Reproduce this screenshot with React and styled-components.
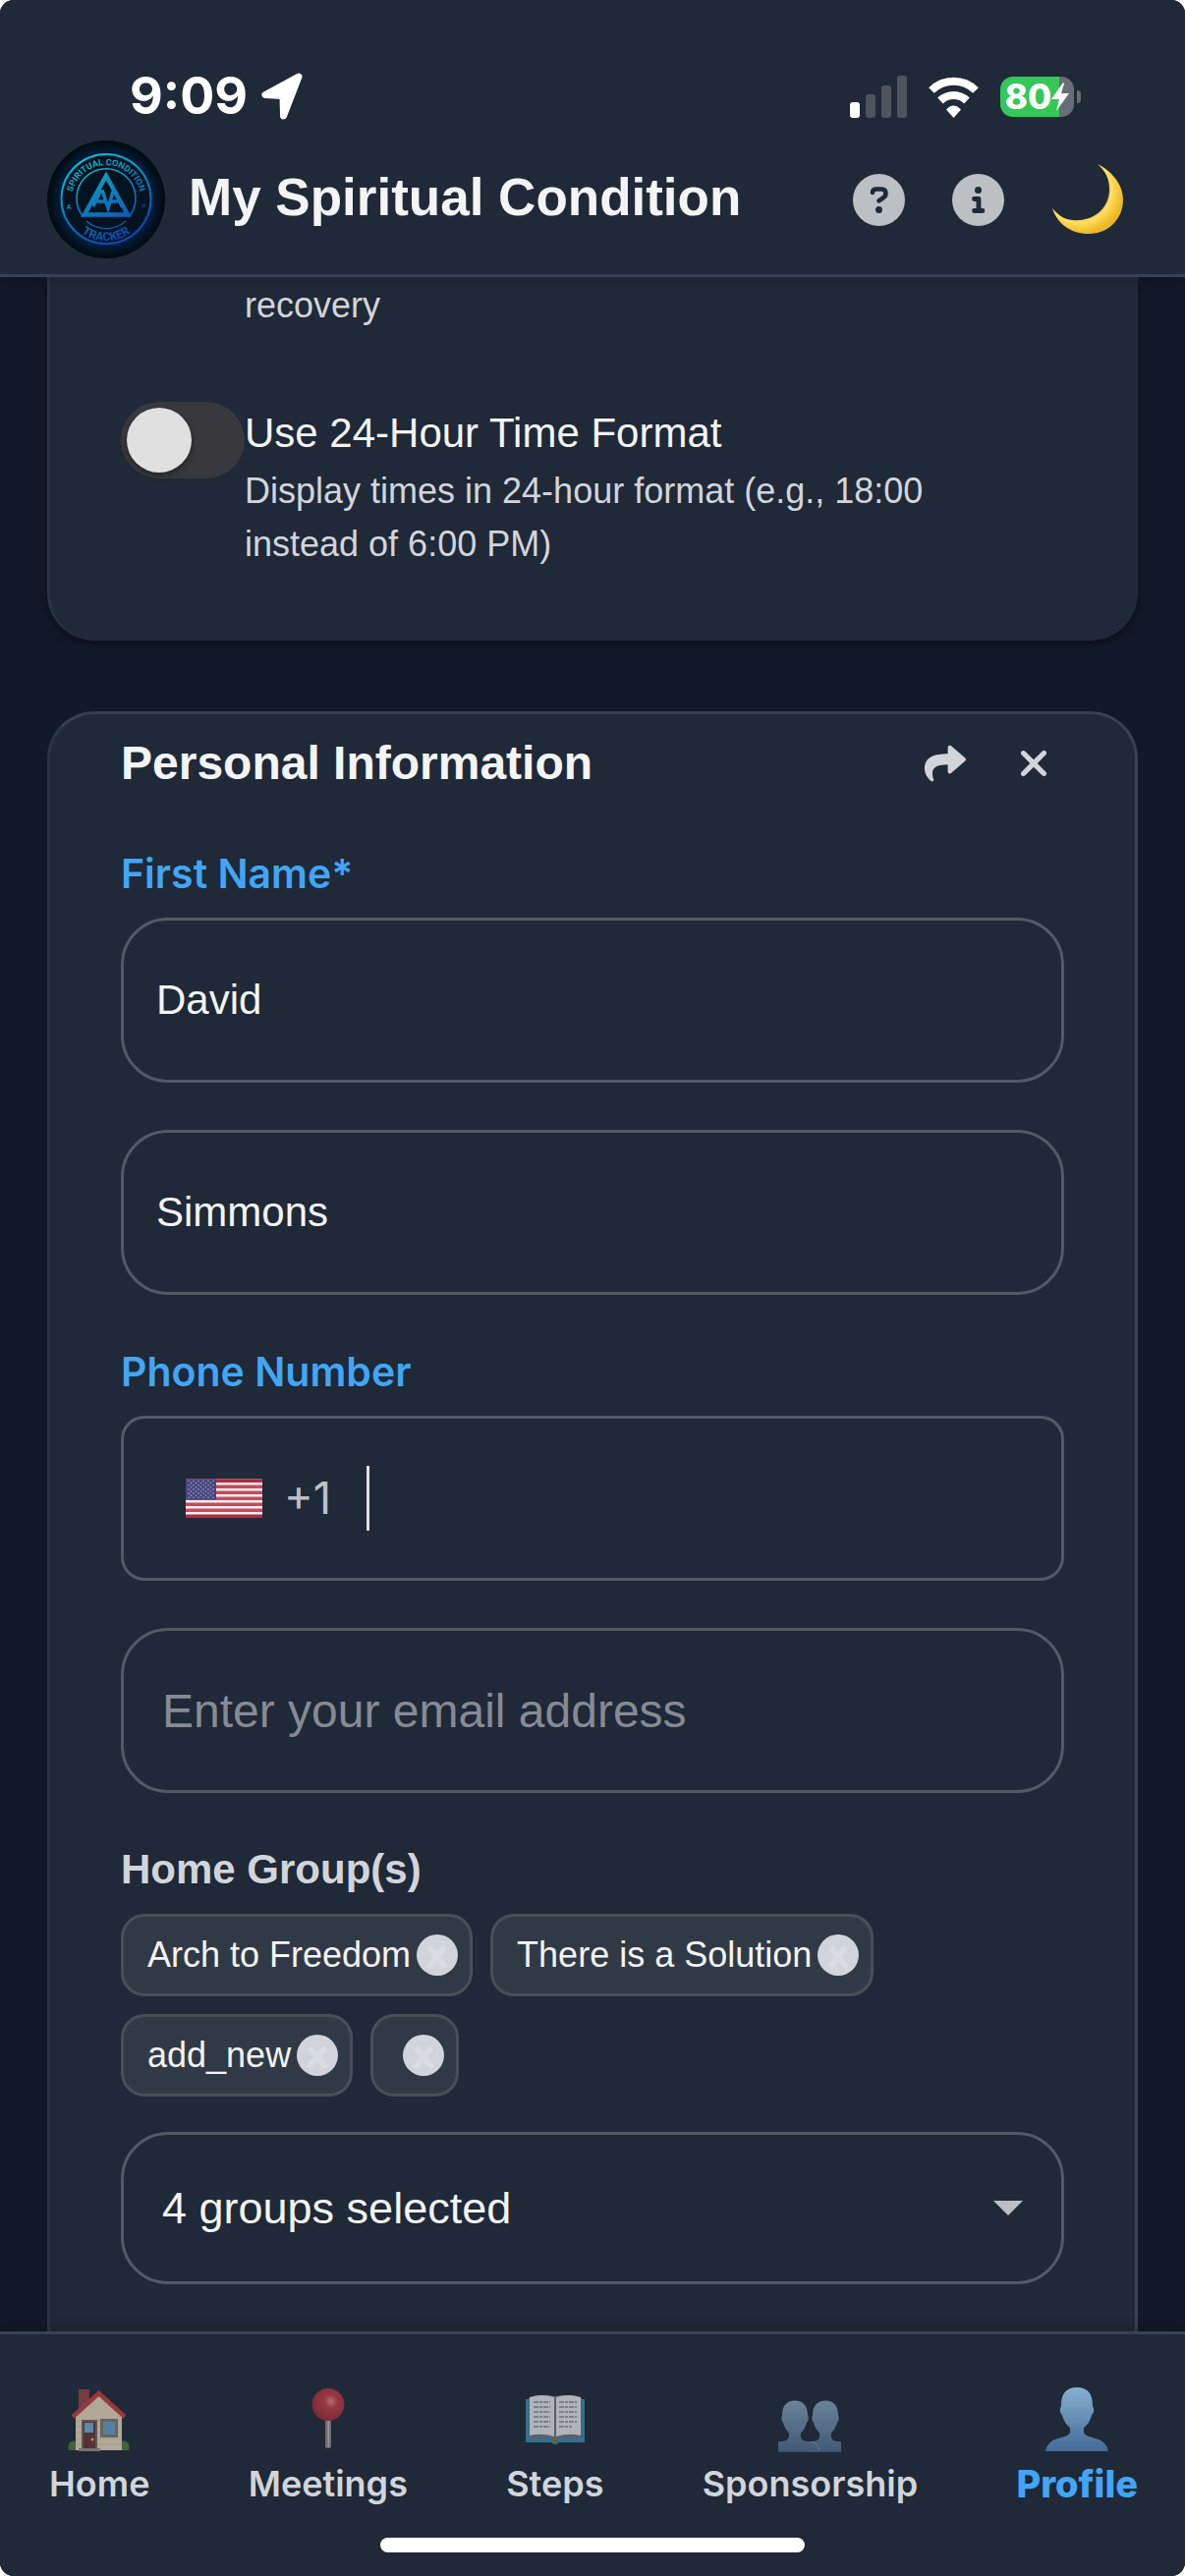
import React from "react";
import styled, { createGlobalStyle } from "styled-components";
import { FaShare } from "react-icons/fa";
import { FaXmark } from "react-icons/fa6";

const sans = '"Liberation Sans", Arial, sans-serif';
const ui = 'Inter, Roboto, sans-serif';

const GlobalStyle = createGlobalStyle`
  * { box-sizing: border-box; }
  html, body { margin: 0; height: 100%; background: #fff; overflow: hidden; }
  #root { height: 100%; }
  button, input, select { font: inherit; color: inherit; }
`;

const Screen = styled.div`
  height: 100vh;
  display: flex;
  flex-direction: column;
  background: #111827;
  color: #f3f4f6;
  font-family: ${sans};
  border-radius: 14px;
  overflow: hidden;
`;

const Header = styled.header`
  flex: none;
  background: #1f2937;
  border-bottom: 3px solid #374151;
  box-shadow: 0 3px 12px rgba(0, 0, 0, 0.15);
  z-index: 1;
`;

const StatusBar = styled.div`
  display: flex;
  align-items: center;
  justify-content: space-between;
  height: 140px;
  padding: 56px 106px 0 132px;
`;

const StatusGroup = styled.div`
  display: flex;
  align-items: center;
  gap: ${(p) => p.$gap}px;
`;

const Clock = styled.span`
  font: 700 52px/60px ${ui};
  color: #fff;
`;

const Battery = styled.div`
  display: flex;
  align-items: center;
  gap: 3px;
`;

const BatteryBody = styled.div`
  display: flex;
  align-items: center;
  justify-content: center;
  width: 75px;
  height: 41px;
  border-radius: 13px;
  background: linear-gradient(90deg, #34c759 80%, #686d76 80%);
  color: #fff;
  font: 800 35px/41px ${ui};
`;

const BatteryCap = styled.span`
  width: 4px;
  height: 13px;
  border-radius: 0 4px 4px 0;
  background: #686d76;
`;

const TitleBar = styled.div`
  display: flex;
  align-items: center;
  padding: 3px 53px 16px 48px;
`;

const Title = styled.h1`
  flex: 1;
  margin: 0 0 0 24px;
  padding-bottom: 4px;
  font-size: 53px;
  line-height: 60px;
  font-weight: 700;
`;

const Actions = styled.div`
  display: flex;
  align-items: center;
  gap: 28px;
`;

const IconButton = styled.button`
  display: grid;
  place-items: center;
  width: ${(p) => p.$size}px;
  height: ${(p) => p.$size}px;
  padding: 0;
  border: 0;
  background: none;
  color: #d1d5db;
  font-size: 42px;
`;

const Content = styled.main`
  flex: 1;
  min-height: 0;
  overflow: hidden;
  padding: 0 48px;
`;

const Card = styled.section`
  padding: 0 72px;
  border: 3px solid #374151;
  background: #1f2937;
`;

const SettingsCard = styled(Card)`
  border-top: 0;
  border-bottom: 0;
  border-right: 0;
  border-color: #2a3543;
  border-radius: 0 0 48px 48px;
  padding-bottom: 71px;
  margin-bottom: 72px;
  box-shadow: 0 3px 9px rgba(0, 0, 0, 0.4);
`;

const InfoCard = styled(Card)`
  border-left-color: #2a3543;
  border-radius: 48px 48px 0 0;
  padding-top: 20px;
  padding-bottom: 200px;
`;

const Setting = styled.div`
  display: flex;
  align-items: flex-start;
`;

const SettingText = styled.div`
  display: flex;
  flex-direction: column;
  gap: 2px;
  padding-top: 2px;
`;

const PreviousHint = styled.p`
  margin: 0;
  padding: 2px 0 71px 126px;
  font-size: 36px;
  line-height: 54px;
  color: #d1d5db;
`;

const SettingLabel = styled.label`
  font-size: 42px;
  line-height: 60px;
`;

const Hint = styled.span`
  max-width: 760px;
  font-size: 36px;
  line-height: 54px;
  color: #d1d5db;
`;

const Switch = styled.input`
  appearance: none;
  flex: none;
  width: 126px;
  height: 78px;
  margin: 0;
  padding: 6px;
  border-radius: 39px;
  background: #39393d;
  &::before {
    content: "";
    display: block;
    width: 66px;
    height: 66px;
    border-radius: 50%;
    background: #e0e0e0;
    box-shadow: 0 3px 6px rgba(0, 0, 0, 0.4);
  }
`;

const CardHeader = styled.div`
  display: flex;
  align-items: center;
  justify-content: space-between;
  height: 60px;
  margin-bottom: 52px;
`;

const CardTitle = styled.h2`
  margin: 0;
  font-size: 48px;
  line-height: 60px;
`;

const Field = styled.div`
  display: flex;
  flex-direction: column;
  margin-bottom: 48px;
`;

const BlueLabel = styled.label`
  font: 600 41px/60px ${ui};
  color: #42a5f5;
  padding-bottom: 15px;
`;

const GroupLabel = styled.label`
  font-size: 42px;
  font-weight: 700;
  line-height: 60px;
  color: #d1d5db;
`;

const TextInput = styled.input`
  width: 100%;
  height: 168px;
  padding: 0 ${(p) => p.$inset}px;
  border: 3px solid #525a66;
  border-radius: 48px;
  outline: 0;
  background: transparent;
  font-size: ${(p) => p.$size}px;
  &::placeholder { color: #858b94; opacity: 1; }
`;

const PhoneBox = styled.div`
  display: flex;
  align-items: center;
  height: 168px;
  padding: 0 39px 0 63px;
  border: 3px solid #525a66;
  border-radius: 24px;
`;

const DialCode = styled.span`
  margin: 0 36px 0 22px;
  font: 400 45px/60px ${ui};
  color: #bcc0c6;
`;

const PhoneInput = styled.input`
  flex: 1;
  min-width: 0;
  height: 66px;
  padding: 0;
  border: 0;
  border-left: 3px solid #e0e0e0;
  outline: 0;
  background: none;
  font-size: 45px;
`;

const Chips = styled.div`
  display: flex;
  flex-wrap: wrap;
  gap: 18px;
  margin: 15px 0 36px;
`;

const Chip = styled.span`
  display: flex;
  align-items: center;
  gap: 6px;
  height: 84px;
  padding: 0 12px 0 24px;
  border: 3px solid #475059;
  border-radius: 24px;
  background: #303a46;
  font-size: 36px;
`;

const Remove = styled.button`
  display: grid;
  place-items: center;
  width: 42px;
  height: 42px;
  padding: 0;
  border: 0;
  border-radius: 50%;
  background: #d1d5db;
`;

const SelectWrap = styled.div`
  display: grid;
  align-items: center;
  & > * { grid-area: 1 / 1; }
  & > svg { justify-self: end; margin-right: 42px; pointer-events: none; }
`;

const Select = styled.select`
  appearance: none;
  width: 100%;
  height: 155px;
  padding: 0 39px;
  border: 3px solid #525a66;
  border-radius: 48px;
  background: transparent;
  font-size: 45px;
`;

const BottomBar = styled.footer`
  flex: none;
  height: 249px;
  display: flex;
  flex-direction: column;
  align-items: center;
  background: #1f2937;
  border-top: 3px solid #374151;
  box-shadow: 0 -3px 12px rgba(0, 0, 0, 0.15);
  z-index: 1;
`;

const Nav = styled.nav`
  align-self: stretch;
  display: flex;
  justify-content: space-between;
  padding: 48px 48px 0 50px;
  margin-bottom: 31px;
`;

const NavLink = styled.a`
  display: flex;
  flex-direction: column;
  align-items: center;
  text-decoration: none;
  font: ${(p) => (p.$active ? "800 38px" : "600 36px")}/48px ${ui};
  color: ${(p) => (p.$active ? "#42a5f5" : "#d1d5db")};
  & > svg { margin-bottom: 8px; opacity: ${(p) => (p.$active ? 1 : 0.7)}; }
`;

const HomeIndicator = styled.div`
  width: 432px;
  height: 15px;
  border-radius: 8px;
  background: #fff;
`;

const LocationArrow = () => (
  <svg width="42" height="48" viewBox="0 0 42 48" fill="#fff" stroke="#fff" strokeWidth="7" strokeLinejoin="round">
    <path d="M38 4 L4 22.500 L22 23.500 L22.500 44 Z" />
  </svg>
);

const Signal = () => (
  <svg width="58" height="43" viewBox="0 0 58 43" fill="#4d545f">
    <rect x="0" y="27" width="10" height="16" rx="3" fill="#fff" />
    <rect x="16" y="19" width="10" height="24" rx="3" />
    <rect x="32" y="10" width="10" height="33" rx="3" />
    <rect x="48" y="0" width="10" height="43" rx="3" />
  </svg>
);

const Wifi = () => (
  <svg width="51" height="43" viewBox="0 0 51 43" fill="none" stroke="#fff" strokeWidth="8">
    <path d="M3 15 A32 32 0 0 1 48 15" />
    <path d="M12 25.500 A19.500 19.500 0 0 1 39 25.500" />
    <path d="M25.500 43 L18 34.500 Q25.500 26.500 33 34.500 Z" fill="#fff" stroke="none" />
  </svg>
);

const Bolt = () => (
  <svg width="18" height="29" viewBox="0 0 18 29" fill="#fff">
    <path d="M12 0 L0 17 H8 L5 29 L18 11 H10 L13 1 Z" />
  </svg>
);

const Logo = () => (
  <svg width="120" height="120" viewBox="0 0 120 120" role="img" aria-label="Spiritual Condition Tracker">
    <defs>
      <radialGradient id="disc">
        <stop offset="0" stopColor="#021420" />
        <stop offset=".7" stopColor="#02131f" />
        <stop offset=".79" stopColor="#031c3b" />
        <stop offset=".92" stopColor="#02101c" />
        <stop offset="1" stopColor="#020a12" />
      </radialGradient>
      <linearGradient id="neon" gradientUnits="userSpaceOnUse" x1="35" y1="12" x2="80" y2="106">
        <stop offset="0" stopColor="#18c4cf" />
        <stop offset=".5" stopColor="#0d7dbb" />
        <stop offset="1" stopColor="#0a41ad" />
      </linearGradient>
      <path id="arcTop" d="M25 60 A35 35 0 0 1 95 60" />
      <path id="arcBottom" d="M18 60 A42 42 0 0 0 102 60" />
    </defs>
    <circle cx="60" cy="60" r="60" fill="url(#disc)" />
    <g fill="none" stroke="url(#neon)">
      <circle cx="60" cy="59.500" r="45.500" strokeWidth="2" />
      <path d="M37 78 A30 30 0 1 1 83 78" strokeWidth="1.600" />
      <path d="M40 82 A30 30 0 0 0 80 82" strokeWidth="1.200" />
      <path d="M60 36 L38 75.500 H82 Z" strokeWidth="4.500" />
      <path d="M47 67 L54 52 H56.500 L62 69 L67 52 H69.500 L76 67 M51 62 H60 M65 62 H74" strokeWidth="3.400" />
    </g>
    <g fill="url(#neon)" fontFamily="Roboto, sans-serif" fontWeight="700" textAnchor="middle">
      <text fontSize="9"><textPath href="#arcTop" startOffset="50%">SPIRITUAL CONDITION</textPath></text>
      <text fontSize="12"><textPath href="#arcBottom" startOffset="50%">TRACKER</textPath></text>
      <text x="22" y="70" fontSize="7">A</text>
      <text x="98" y="69" fontSize="7">≡</text>
    </g>
  </svg>
);

const HelpIcon = () => (
  <svg width="53" height="53" viewBox="0 0 53 53">
    <circle cx="26.500" cy="26.500" r="26.500" fill="#bcbfc4" />
    <path d="M20 19 Q20 15.500 24 15.500 H29 Q33.500 15.500 33.500 20 Q33.500 23 30 25 L26.500 27.300" fill="none" stroke="#1f2937" strokeWidth="4.600" strokeLinecap="round" strokeLinejoin="round" />
    <circle cx="26.500" cy="36.500" r="3.500" fill="#1f2937" />
  </svg>
);

const InfoIcon = () => (
  <svg width="53" height="53" viewBox="0 0 53 53">
    <circle cx="26.500" cy="26.500" r="26.500" fill="#bcbfc4" />
    <circle cx="26.500" cy="16.500" r="3.500" fill="#1f2937" />
    <path d="M22.500 25.500 H27 V37.500 M22.500 37.500 H31" fill="none" stroke="#1f2937" strokeWidth="4.800" strokeLinecap="round" strokeLinejoin="round" />
  </svg>
);

const Moon = () => (
  <svg width="72" height="72" viewBox="0 0 72 72">
    <defs>
      <radialGradient id="moon" gradientUnits="userSpaceOnUse" cx="27" cy="26" r="46">
        <stop offset=".62" stopColor="#eea52e" />
        <stop offset=".72" stopColor="#fde06a" />
        <stop offset=".86" stopColor="#f7cb3c" />
        <stop offset="1" stopColor="#e9b824" />
      </radialGradient>
    </defs>
    <path d="M46 0 C62 8 72 22 72 36 C72 56 57 71 37 71 C19 71 5 61 0 45 C8 55 17 58 27 57 C45 56 58 43 58 26 C58 15 54 7 46 0 Z" fill="url(#moon)" />
  </svg>
);

const Flag = () => (
  <svg width="78" height="40" viewBox="0 0 78 39">
    <rect width="78" height="39" fill="#f6eef0" />
    {[0, 1, 2, 3, 4, 5, 6].map((i) => (
      <rect key={i} y={i * 6} width="78" height="3.500" fill={i % 6 ? "#c74a5b" : "#b8283d"} />
    ))}
    <rect width="31" height="21" fill="#46467f" />
    {[0, 1, 2, 3, 4, 5, 6, 7, 8].map((r) =>
      [0, 1, 2, 3, 4, 5].map((c) =>
        r % 2 && c === 5 ? null : (
          <circle key={`${r}-${c}`} cx={3 + c * 5 + (r % 2 ? 2.5 : 0)} cy={2 + r * 2.1} r=".8" fill="#a3a1c0" />
        )
      )
    )}
  </svg>
);

const SmallCross = () => (
  <svg width="26" height="26" viewBox="0 0 26 26" fill="none" stroke="#d9dce1" strokeWidth="6">
    <path d="M5 5 L22 26 M21 5 L4 26" />
  </svg>
);

const HouseIcon = () => (
  <svg width="64" height="72" viewBox="0 0 64 72">
    <path d="M11 8 H22 V20 L11 30 Z" fill="#9a4444" />
    <path d="M8 32 L32 11 L55 32 V70 H8 Z" fill="#f0dfc0" />
    <path d="M9 40 H54 M9 46 H54 M9 52 H54 M9 58 H54 M9 64 H54" stroke="#dccbab" strokeWidth="1" />
    <path d="M5 36 L31.500 12 L58 36" fill="none" stroke="#c8403f" strokeWidth="4.500" />
    <rect x="14" y="39" width="16" height="30" fill="#7c6a62" />
    <rect x="16" y="41" width="12" height="27" fill="#6b3833" />
    <rect x="17" y="42" width="9" height="10" fill="#75b4dc" />
    <circle cx="25" cy="59" r="1.500" fill="#e9c35a" />
    <rect x="33" y="38" width="18" height="19" fill="#8a7c70" />
    <rect x="36" y="41" width="12" height="13" fill="#6da5cf" />
    <rect x="11" y="68" width="22" height="3" fill="#9a9590" />
    <path d="M8 70 H1 C-1 64 3 59 8 61 Z M55 70 H62 C64 64 60 59 55 61 Z" fill="#4f7e3c" />
  </svg>
);

const PinIcon = () => (
  <svg width="64" height="72" viewBox="0 0 64 72">
    <defs>
      <radialGradient id="pin" cx=".58" cy=".4" r=".6">
        <stop offset="0" stopColor="#f28b84" />
        <stop offset=".35" stopColor="#cc3f48" />
        <stop offset="1" stopColor="#a32b36" />
      </radialGradient>
    </defs>
    <path d="M29 37 H35 V67 Q32 69 29 67 Z" fill="#8f8b8d" />
    <path d="M31.500 37 H33 V67 H31.500 Z" fill="#c6c2c3" />
    <circle cx="32" cy="23.500" r="16.500" fill="url(#pin)" />
  </svg>
);

const BookIcon = () => (
  <svg width="64" height="72" viewBox="0 0 64 72">
    <path d="M2 18 H62 V62 H36 Q32 66 28 62 H2 Z" fill="#3a8fbd" />
    <path d="M5 17 Q17 12 31 15 Q46 12 59 17 V58 H5 Z" fill="#77787d" />
    <path d="M6 16 Q18 12 31 16 V56 Q18 52 6 55 Z M33 16 Q46 12 58 16 V55 Q46 52 33 56 Z" fill="#eeeef2" />
    <path d="M10 21 H27 M10 26 H27 M10 31 H27 M10 36 H27 M10 41 H27 M10 46 H27 M36 21 H54 M36 26 H54 M36 31 H54 M36 36 H54 M36 41 H54 M36 46 H49" stroke="#8d8f97" strokeWidth="1.500" strokeDasharray="5 1 3 1" />
    <circle cx="32" cy="60" r="2.500" fill="#8c7830" />
  </svg>
);

const PeopleIcon = () => (
  <svg width="64" height="72" viewBox="0 0 64 72">
    <defs>
      <linearGradient id="people" x1="0" y1="0" x2="0" y2="1">
        <stop offset="0" stopColor="#8ba9c0" />
        <stop offset="1" stopColor="#516e90" />
      </linearGradient>
    </defs>
    <g transform="translate(0 9) scale(1 .87)">
      <path d="M48 12 C57 12 61 19 61 29 Q63 34 60 38 Q58 46 54 50 C53 58 56 60 64 60 V72 H32 V60 C40 60 43 58 42 50 Q38 46 36 38 Q33 34 35 29 C35 19 39 12 48 12 Z" fill="url(#people)" />
      <path d="M17 12 C26 12 30 19 30 29 Q32 34 29 38 Q27 46 23 50 C22 58 25 60 33 60 Q40 62 42 72 H0 V60 C8 60 12 58 11 50 Q7 46 5 38 Q2 34 4 29 C4 19 8 12 17 12 Z" fill="url(#people)" />
      <path d="M33 60 Q40 61 42 70" fill="none" stroke="#86a3ba" strokeWidth="1" />
    </g>
  </svg>
);

const PersonIcon = () => (
  <svg width="64" height="72" viewBox="0 0 64 72">
    <defs>
      <linearGradient id="person" x1="0" y1="0" x2="0" y2="1">
        <stop offset="0" stopColor="#86b0cf" />
        <stop offset="1" stopColor="#456a98" />
      </linearGradient>
    </defs>
    <path transform="translate(0 6) scale(1 .89)" d="M32 0 C43 0 48 7 48 21 Q51 27 47 32 Q45 41 39 46 V52 C43 60 61 55 64 73 H0 C3 55 21 60 25 52 V46 Q19 41 17 32 Q13 27 16 21 C16 7 21 0 32 0 Z" fill="url(#person)" />
  </svg>
);

const navItems = [
  { name: "Home", Icon: HouseIcon },
  { name: "Meetings", Icon: PinIcon },
  { name: "Steps", Icon: BookIcon },
  { name: "Sponsorship", Icon: PeopleIcon },
  { name: "Profile", Icon: PersonIcon, active: true },
];

const groups = ["Arch to Freedom", "There is a Solution", "add_new", ""];

export default function App() {
  return (
    <Screen>
      <GlobalStyle />
      <Header>
        <StatusBar>
          <StatusGroup $gap={14}>
            <Clock>9:09</Clock>
            <LocationArrow />
          </StatusGroup>
          <StatusGroup $gap={22}>
            <Signal />
            <Wifi />
            <Battery>
              <BatteryBody>80<Bolt /></BatteryBody>
              <BatteryCap />
            </Battery>
          </StatusGroup>
        </StatusBar>
        <TitleBar>
          <Logo />
          <Title>My Spiritual Condition</Title>
          <Actions>
            <IconButton $size={73} aria-label="Help"><HelpIcon /></IconButton>
            <IconButton $size={73} aria-label="About"><InfoIcon /></IconButton>
            <IconButton $size={93} aria-label="Toggle theme"><Moon /></IconButton>
          </Actions>
        </TitleBar>
      </Header>

      <Content>
        <SettingsCard>
          <PreviousHint>recovery</PreviousHint>
          <Setting>
            <Switch type="checkbox" id="time-format" />
            <SettingText>
              <SettingLabel htmlFor="time-format">Use 24-Hour Time Format</SettingLabel>
              <Hint>Display times in 24-hour format (e.g., 18:00 instead of 6:00 PM)</Hint>
            </SettingText>
          </Setting>
        </SettingsCard>

        <InfoCard>
          <CardHeader>
            <CardTitle>Personal Information</CardTitle>
            <Actions>
              <IconButton $size={62} aria-label="Share"><FaShare /></IconButton>
              <IconButton $size={62} aria-label="Close"><FaXmark /></IconButton>
            </Actions>
          </CardHeader>
          <Field>
            <BlueLabel htmlFor="first">First Name*</BlueLabel>
            <TextInput id="first" defaultValue="David" $size={42} $inset={33} />
          </Field>
          <Field>
            <TextInput aria-label="Last Name" defaultValue="Simmons" $size={42} $inset={33} />
          </Field>
          <Field>
            <BlueLabel htmlFor="phone">Phone Number</BlueLabel>
            <PhoneBox>
              <Flag />
              <DialCode>+1</DialCode>
              <PhoneInput id="phone" type="tel" />
            </PhoneBox>
          </Field>
          <Field>
            <TextInput type="email" aria-label="Email" placeholder="Enter your email address" $size={48} $inset={39} />
          </Field>
          <GroupLabel htmlFor="groups">Home Group(s)</GroupLabel>
          <Chips>
            {groups.map((g) => (
              <Chip key={g}>
                <span>{g}</span>
                <Remove aria-label={`Remove ${g}`}><SmallCross /></Remove>
              </Chip>
            ))}
          </Chips>
          <SelectWrap>
            <Select id="groups"><option>4 groups selected</option></Select>
            <svg width="30" height="15" viewBox="0 0 30 15" fill="#bcc0c6"><path d="M0 0 H30 L15 15 Z" /></svg>
          </SelectWrap>
        </InfoCard>
      </Content>

      <BottomBar>
        <Nav>
          {navItems.map(({ name, Icon, active }) => (
            <NavLink key={name} href={`#${name.toLowerCase()}`} $active={active}>
              <Icon />
              {name}
            </NavLink>
          ))}
        </Nav>
        <HomeIndicator />
      </BottomBar>
    </Screen>
  );
}
